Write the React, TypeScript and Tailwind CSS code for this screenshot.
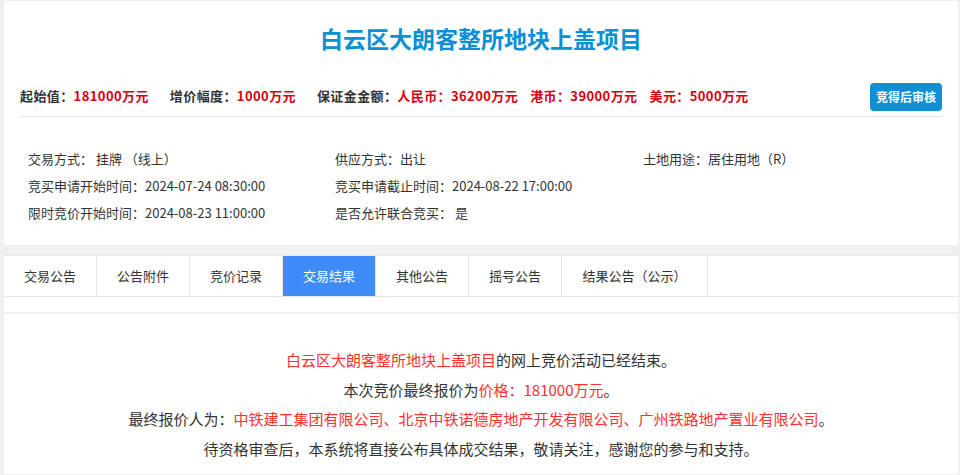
import React from 'react';

const tabs = ['交易公告', '公告附件', '竞价记录', '交易结果', '其他公告', '摇号公告', '结果公告（公示）'];

const infoRows: string[][] = [
  ['交易方式： 挂牌 （线上）', '供应方式：出让', '土地用途：居住用地（R）'],
  ['竞买申请开始时间：2024-07-24 08:30:00', '竞买申请截止时间：2024-08-22 17:00:00', ''],
  ['限时竞价开始时间：2024-08-23 11:00:00', '是否允许联合竞买： 是', ''],
];

export default function App() {
  const font = { fontFamily: '"Noto Sans CJK SC", "Noto Sans", sans-serif' };

  return (
    <div className="w-[960px] h-[475px] overflow-hidden bg-[#f0f0f0] pt-px pl-[4px] pr-[2px] text-[#333]" style={font}>
      {/* 项目头部 */}
      <div className="bg-white h-[244px]">
        <h1 className="pt-[20px] text-center text-[23px] leading-[34px] font-bold text-[#0b8fd5]">
          白云区大朗客整所地块上盖项目
        </h1>

        <div className="mx-[16px] mt-[28px] flex items-end justify-between border-b border-[#e6e6ec] pb-[5px]">
          <div className="flex items-center pb-[5px] text-[13px] font-bold leading-[20px] gap-[21px] tracking-[0.4px]">
            <span>
              起始值：<span className="text-[#d9000f]">181000万元</span>
            </span>
            <span>
              增价幅度：<span className="text-[#d9000f]">1000万元</span>
            </span>
            <span className="flex gap-[12px]">
              <span>
                保证金金额：<span className="text-[#d9000f]">人民币：36200万元</span>
              </span>
              <span className="text-[#d9000f]">港币：39000万元</span>
              <span className="text-[#d9000f]">美元：5000万元</span>
            </span>
          </div>
          <button className="h-[28px] w-[72px] rounded-[4px] bg-[#0e90d2] text-white text-[12px] font-bold">
            竞得后审核
          </button>
        </div>

        <div className="pl-[24px] pt-[28px] text-[13px] leading-[27px]">
          {infoRows.map((row, i) => (
            <div key={i} className="grid grid-cols-[307px_308px_1fr]">
              {row.map((cell, j) => (
                <span key={j}>{cell}</span>
              ))}
            </div>
          ))}
        </div>
      </div>

      {/* 选项卡 */}
      <div className="mt-[10px] bg-white h-[57px]">
        <div className="flex h-[42px] border-b border-[#e6e6ee] border-t">
          {tabs.map((t, i) => (
            <div
              key={t}
              className={
                (i === tabs.length - 1 ? 'w-[146px] ' : 'w-[93px] ') +
                (i === 3 ? 'bg-[#3f8cf8] text-white ' : 'text-[#333] ') +
                'flex items-center justify-center border-r border-[#e6e6ee] text-[13px]'
              }
            >
              {t}
            </div>
          ))}
        </div>
      </div>

      {/* 交易结果 */}
      <div className="mt-[2px] bg-white h-[160px] pt-[31px] text-center text-[15px] leading-[29.5px] text-[#333]">
        <p>
          <span className="text-[#ff3030]">白云区大朗客整所地块上盖项目</span>的网上竞价活动已经结束。
        </p>
        <p>
          本次竞价最终报价为<span className="text-[#ff3030]">价格：181000万元</span>。
        </p>
        <p>
          最终报价人为：
          <span className="text-[#ff3030]">中铁建工集团有限公司、北京中铁诺德房地产开发有限公司、广州铁路地产置业有限公司</span>。
        </p>
        <p>待资格审查后，本系统将直接公布具体成交结果，敬请关注，感谢您的参与和支持。</p>
      </div>
    </div>
  );
}
